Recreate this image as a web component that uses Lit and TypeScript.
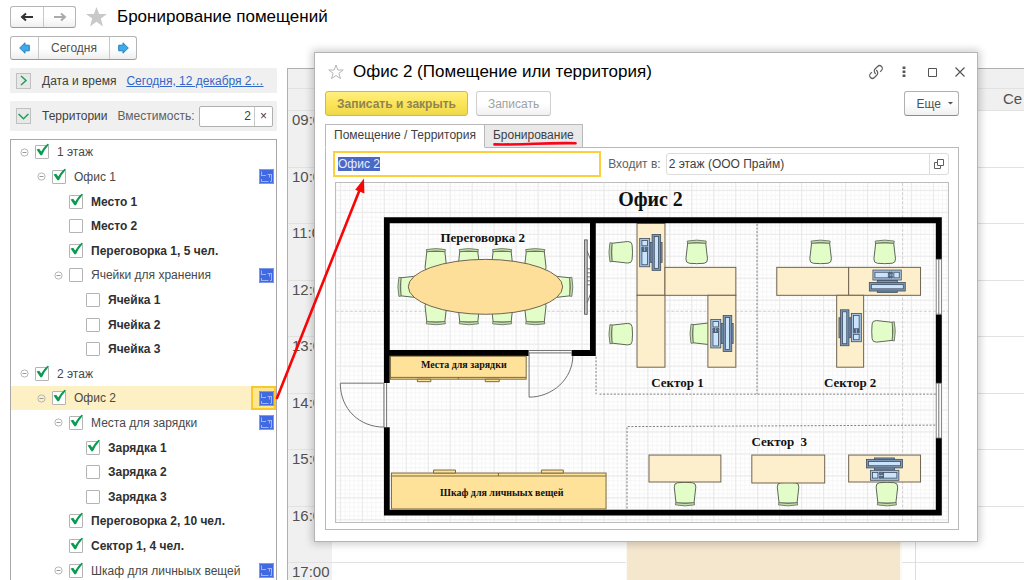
import { LitElement, html, svg, css, nothing } from "lit";
import { customElement, property, state } from "lit/decorators.js";
import { classMap } from "lit/directives/class-map.js";

interface Place {
  name: string;
  level: number;
  checked: boolean;
  group?: boolean;
  plan?: boolean;
  bold?: boolean;
  selected?: boolean;
}

const PLACES: Place[] = [
  { name: "1 этаж", level: 0, checked: true, group: true },
  { name: "Офис 1", level: 1, checked: true, group: true, plan: true },
  { name: "Место 1", level: 2, checked: true, bold: true },
  { name: "Место 2", level: 2, checked: false, bold: true },
  { name: "Переговорка 1, 5 чел.", level: 2, checked: true, bold: true },
  { name: "Ячейки для хранения", level: 2, checked: false, group: true, plan: true },
  { name: "Ячейка 1", level: 3, checked: false, bold: true },
  { name: "Ячейка 2", level: 3, checked: false, bold: true },
  { name: "Ячейка 3", level: 3, checked: false, bold: true },
  { name: "2 этаж", level: 0, checked: true, group: true },
  { name: "Офис 2", level: 1, checked: true, group: true, plan: true, selected: true },
  { name: "Места для зарядки", level: 2, checked: true, group: true, plan: true },
  { name: "Зарядка 1", level: 3, checked: true, bold: true },
  { name: "Зарядка 2", level: 3, checked: false, bold: true },
  { name: "Зарядка 3", level: 3, checked: false, bold: true },
  { name: "Переговорка 2, 10 чел.", level: 2, checked: true, bold: true },
  { name: "Сектор 1, 4 чел.", level: 2, checked: true, bold: true },
  { name: "Шкаф для личныых вещей", level: 2, checked: true, group: true, plan: true },
];

const HOURS = ["09:00", "10:00", "11:00", "12:00", "13:00", "14:00", "15:00", "16:00", "17:00"];

/** Floor plan of the office, drawn in window units. */
@customElement("floor-plan")
export class FloorPlan extends LitElement {
  static styles = css`
    :host { display: block; }
    svg { display: block; width: 100%; height: auto; }
    text { font-family: "Liberation Serif", serif; font-weight: bold; fill: #111; text-anchor: middle; }
    .title { font-size: 20px; }
    .label { font-size: 13px; }
    .shelf { font-size: 10px; }
    .desk { fill: #feefcc; stroke: #6f6350; }
    .cabinet { fill: #ffe29a; stroke: #7a6a3c; }
    .chair { fill: #e3fdc9; stroke: #5c6658; }
    .back { fill: #c3dfa9; stroke: #5c6658; stroke-width: 0.8; }
    .pc { fill: #7e97b4; stroke: #3e4d60; stroke-width: 0.8; }
    .keys { fill: #a9c4e2; stroke: #3e4d60; stroke-width: 0.8; }
    .screen { fill: #cbe3fb; stroke: #3e4d60; stroke-width: 0.8; }
    .thin { fill: none; stroke: #707070; }
    .dots { fill: none; stroke: #7c7c7c; stroke-dasharray: 2 1.6; }
    .dash { fill: none; stroke: #d0d0d0; stroke-dasharray: 3 1.6; }
    .window { fill: #fff; stroke: #777; stroke-width: 0.9; }
    .tv { fill: #c8c8c8; stroke: #555; stroke-width: 0.9; }
  `;

  private chair(x: number, y: number, turn: number) {
    return svg`<g transform="translate(${x} ${y}) rotate(${turn})">
      <path class="chair" d="M-9 -9 L-10.8 7 Q-11 11 -7.4 11.4 Q0 12.2 7.4 11.4 Q11 11 10.8 7 L9 -9 Z"></path>
      <path class="back" d="M-9.6 -10.8 Q0 -12.8 9.6 -10.8 L9.2 -8.6 Q0 -10.2 -9.2 -8.6 Z"></path>
    </g>`;
  }

  private computer(x: number, y: number, turn: number) {
    return svg`<g transform="translate(${x} ${y}) rotate(${turn})">
      <rect class="pc" x="-1" y="-10" width="12" height="20"></rect>
      <rect class="pc" x="1" y="-18" width="8.6" height="36"></rect>
      <rect class="screen" x="3.2" y="-16" width="4.2" height="32"></rect>
      <rect class="keys" x="-11.4" y="-14" width="10" height="28.4"></rect>
      <rect class="screen" x="-9.2" y="-12" width="5.6" height="5.4"></rect>
      <rect class="screen" x="-9.2" y="-1" width="5.6" height="13.4"></rect>
      <path class="pc" d="M-9.4 -5 h2.2 v1.4 h-2.2z M-5.6 -5 h2.2 v1.4 h-2.2z M-9.4 -2.8 h2.2 v1 h-2.2z M-5.6 -2.8 h2.2 v1 h-2.2z"></path>
    </g>`;
  }

  private desk(x: number, y: number, w: number, h: number) {
    return svg`<rect class="desk" x=${x} y=${y} width=${w} height=${h}></rect>`;
  }

  render() {
    return html`<svg viewBox="336 183 613 340" role="img" aria-label="Офис 2">
      <defs>
        <pattern id="minor" x="384.3" y="234.3" width="4.4" height="4.4" patternUnits="userSpaceOnUse">
          <path d="M0 .5H4.4M.5 0V4.4" fill="none" stroke="#f6f6f6" stroke-width="1"></path>
        </pattern>
        <pattern id="major" x="383.8" y="233.8" width="22" height="22" patternUnits="userSpaceOnUse">
          <path d="M0 .5H22M.5 0V22" fill="none" stroke="#e9e9e9" stroke-width="1"></path>
        </pattern>
      </defs>
      <rect x="336" y="183" width="613" height="340" fill="#fff"></rect>
      <rect x="336" y="183" width="613" height="340" fill="url(#minor)"></rect>
      <rect x="336" y="183" width="613" height="340" fill="url(#major)"></rect>
      <path class="dash" d="M336 311.5H949M903.5 183V523"></path>

      <path class="dots" d="M596.5 357V394.5M600 394.5H937M757.7 224V394.5M627.5 509V427L937 425.5"></path>

      ${[436, 469, 502.4, 535.6].map((x) => [this.chair(x, 260.5, 0), this.chair(x, 313.2, 180)])}
      ${this.chair(409.8, 287, -90)} ${this.chair(561.4, 287, 90)}
      <ellipse cx="485.7" cy="287" rx="77.3" ry="27.5" fill="#fedf99" stroke="#6f6350"></ellipse>
      <path class="thin" d="M587.5 251L591 260M587.5 303L591 294M587.5 269H591M587.5 273H591M587.5 277H591M587.5 281H591M587.5 285H591"></path>
      <rect class="tv" x="585" y="240" width="2.6" height="74.5"></rect>

      ${this.chair(697.3, 252, 0)} ${this.chair(821.4, 252, 0)} ${this.chair(885.6, 252, 0)}
      ${this.chair(621.2, 252.4, -90)} ${this.chair(621.2, 334.4, -90)} ${this.chair(702.4, 334, -90)}
      ${this.chair(884.4, 331.6, 90)}
      ${this.chair(685.6, 494.6, 180)} ${this.chair(788.8, 494.6, 180)} ${this.chair(887.8, 494.6, 180)}

      ${this.desk(637.5, 223.5, 28, 72)} ${this.desk(637.5, 295.5, 28, 72)}
      ${this.desk(665.5, 267.5, 71, 28)} ${this.desk(708.5, 295.5, 28, 72)}
      ${this.desk(777.5, 267.5, 72, 28)} ${this.desk(849.5, 267.5, 72, 28)} ${this.desk(837.5, 295.5, 27, 72)}
      ${this.desk(649.5, 455.5, 72, 27)} ${this.desk(752.5, 455.5, 73, 28)} ${this.desk(849.5, 455.5, 72, 27)}
      ${this.computer(651.6, 252.5, 0)} ${this.computer(722.8, 333.8, 0)}
      ${this.computer(888.2, 281.6, 90)} ${this.computer(850.8, 328, 180)} ${this.computer(885.4, 469.4, -90)}

      <path d="M384 217.4H942.8V259.4H936.8V223.4H596.2V356.2H572V350.4H590.4V223.4H389.8V350.4H529V356.2H389.8V383.4H384Z
        M936.8 314.4H942.8V383.6H936.8Z M384 427.6H389.8V510.2H936.8V438.4H942.8V516H384Z" fill="#000"></path>
      <rect class="window" x="937.2" y="259.4" width="5.2" height="55"></rect>
      <rect class="window" x="937.2" y="383.6" width="5.2" height="54.8"></rect>
      <path class="thin" d="M939.8 259.4V314.4M939.8 383.6V438.4"></path>
      <path class="thin" d="M384 383.5H340.3C340.3 410 360 427.5 384 427.5M384 383.5V427.5M386.7 383.5V427.5"></path>
      <path class="thin" d="M529 350.8H572M529 353.2H572M529.4 353V397.5C553 397.5 573.2 379 573.2 356"></path>

      <rect class="cabinet" x="390.5" y="356.5" width="136" height="23"></rect>
      <path class="cabinet" d="M390.5 377.7H526.5M458.5 377.7V379.5M417.5 379.5H431V382H417.5ZM485.5 379.5H499.5V382H485.5Z"></path>
      <rect class="cabinet" x="391.5" y="473.5" width="215" height="36"></rect>
      <path class="cabinet" d="M391.5 476.5H606.5M498.7 473.5V476.5M433.7 470.5H455.7V473.5H433.7ZM541.7 470.5H563.7V473.5H541.7Z"></path>

      <text class="title" x="651" y="206">Офис 2</text>
      <text class="label" x="483" y="242">Переговорка 2</text>
      <text class="shelf" x="464" y="368">Места для зарядки</text>
      <text class="shelf" x="502" y="497">Шкаф для личныых вещей</text>
      <text class="label" x="678" y="387">Сектор 1</text>
      <text class="label" x="851" y="387">Сектор 2</text>
      <text class="label" x="780" y="446" xml:space="preserve">Сектор  3</text>
    </svg>`;
  }
}

/** One line of the territory tree. */
@customElement("place-row")
export class PlaceRow extends LitElement {
  @property({ attribute: false }) place!: Place;
  @state() private checked = false;

  static styles = css`
    :host { display: block; height: 100%; }
    .row { display: flex; align-items: center; height: 100%; box-sizing: border-box; padding-left: 9px; }
    .selected { background: #fdf0c4; }
    .indent { flex: none; }
    .toggle { flex: none; width: 9px; height: 9px; padding: 0; margin-right: 6px; border: 0; background: none; }
    .toggle svg, .tick svg, .plan svg { display: block; }
    .spacer { flex: none; width: 15px; }
    .check { display: flex; align-items: center; flex: 1; min-width: 0; gap: 8px; color: #484848; white-space: nowrap; }
    .bold { font-weight: bold; color: #303030; }
    .tick { position: relative; flex: none; width: 14px; height: 14px; }
    .tick input { appearance: none; display: block; box-sizing: border-box; width: 14px; height: 14px; margin: 0;
      border: 1px solid #b4b4b4; border-radius: 1px; background: #fff; }
    .tick svg { position: absolute; left: 0; top: -2px; pointer-events: none; }
    .plan { flex: none; display: flex; align-items: center; justify-content: center; width: 25px; height: 100%;
      box-sizing: border-box; padding: 0 0 0 5px; margin: 0; border: 0; background: none; }
    .selected .plan { border: 2px solid #fbc926; background: #fde691; }
  `;

  willUpdate(changed: Map<string, unknown>) {
    if (changed.has("place")) this.checked = this.place.checked;
  }

  render() {
    const p = this.place;
    return html`<div class=${classMap({ row: true, selected: !!p.selected })}>
      <span class="indent" style="width:${p.level * 17}px"></span>
      ${p.group
        ? html`<button class="toggle" aria-label="Свернуть"><svg width="9" height="9" viewBox="0 0 9 9">
            <circle cx="4.5" cy="4.5" r="3.6" fill="none" stroke="#b5b5b5"></circle><path d="M2.5 4.5H6.5" stroke="#999"></path></svg></button>`
        : html`<span class="spacer"></span>`}
      <label class=${classMap({ check: true, bold: !!p.bold })}>
        <span class="tick">
          <input type="checkbox" .checked=${this.checked} @change=${(e: Event) => (this.checked = (e.target as HTMLInputElement).checked)} />
          ${this.checked
            ? html`<svg width="15" height="14" viewBox="0 0 15 14"><path d="M1.6 6.6L4.2 5.8L6.2 8.6Q8.6 4 12.6 .8L14 1.6Q9.6 6.4 7 12.2H5.4Z" fill="#0a9a50"></path></svg>`
            : nothing}
        </span>
        ${p.name}
      </label>
      ${p.plan
        ? html`<button class="plan" aria-label="План"><svg width="15" height="15" viewBox="0 0 15 15">
            <rect width="15" height="15" fill="#4169e1"></rect>
            <path d="M.5 .5H14.5V14.5H.5Z" fill="none" stroke="#7f99ec"></path>
            <path d="M2.5 13V10M2.5 6.5V2.5M2 6.5H7M8.5 5.5H13M10.5 5.5V8.5M2.5 12.5H9.5M12.5 6V12.5H11" fill="none" stroke="#9fb4f4"></path></svg></button>`
        : nothing}
    </div>`;
  }
}

@customElement("app-root")
export class AppRoot extends LitElement {
  static styles = css`
    :host { display: block; position: relative; height: 100vh; overflow: hidden; background: #fff; color: #404040;
      font: 12px/16px "Liberation Sans", Arial, sans-serif; }
    button, input { font: inherit; color: inherit; }
    button { padding: 0; margin: 0; }
    svg { display: block; }
    .page { display: flex; flex-direction: column; height: 100%; box-sizing: border-box; padding: 6px 0 0 10px; }
    .head { display: flex; align-items: center; gap: 10px; height: 22px; }
    h1, h2 { margin: 0; font-weight: normal; font-size: 17px; line-height: 22px; color: #000; white-space: nowrap; }
    .segments { display: flex; border: 1px solid #b5b5b5; border-bottom-color: #999; border-radius: 3px; box-sizing: border-box;
      background: linear-gradient(#fff 50%, #efefef); }
    .segments button { display: flex; align-items: center; justify-content: center; border: 0; background: none; }
    .segments button + button { border-left: 1px solid #c8c8c8; }
    .history { height: 22px; }
    .history button { width: 32px; }
    .days { align-self: flex-start; height: 24px; margin: 8px 0; color: #505050; }
    .days button { width: 27px; }
    .days .today { width: 71px; }
    .work { display: flex; flex: 1; min-height: 0; gap: 10px; }
    .side { display: flex; flex-direction: column; flex: none; width: 267px; gap: 8px; }
    .group { display: flex; align-items: center; flex: none; height: 25px; padding: 0 4px 0 6px; background: #f0f0f0; white-space: nowrap; }
    .tall { height: 30px; }
    .fold { display: flex; flex: none; align-items: center; justify-content: center; width: 15px; height: 16px; margin-right: 11px;
      border: 1px solid #c0c0c0; background: #e8e8e8; box-sizing: border-box; }
    .group a { margin-left: 10px; color: #3367c8; }
    .caption { margin-left: 10px; color: #606060; }
    .count { display: flex; flex: 1; min-width: 0; height: 21px; margin-left: 4px; box-sizing: border-box; border: 1px solid #b0b0b0;
      border-radius: 2px; background: #fff; }
    .count input { flex: 1; min-width: 0; padding: 0 3px 0 0; border: 0; background: none; text-align: right; outline: 0; }
    .count button { width: 18px; border: 0; border-left: 1px solid #c8c8c8; background: none; }
    .tree { flex: 1; min-height: 0; margin: 0; padding: 0; list-style: none; overflow: hidden; border: 1px solid #a8a8a8; border-bottom: 0; }
    .tree li { height: 25px; }
    .tree li:nth-child(5n + 1), .tree li:nth-child(5n + 4) { height: 24px; }

    .calendar { flex: 1; min-width: 0; display: grid; grid-template-columns: 44px 1fr 109px; grid-template-rows: 42px 1fr;
      overflow: hidden; border: solid #b0b0b0; border-width: 1px 0 0 1px; font-size: 15px; line-height: 18px; color: #505050; }
    .top { background: #f0f0f0; border-bottom: 1px solid #e2e2e2; box-sizing: border-box; }
    .top::before { content: ""; display: block; height: 19px; border-bottom: 1px solid #e2e2e2; }
    .top span { padding-left: 88px; line-height: 20px; }
    .hours { background: #f0f0f0; }
    .day { position: relative; }
    .day + .day { border-left: 1px solid #dcdcdc; }
    .hour { height: 57px; box-sizing: border-box; padding-left: 4px; border-bottom: 1px solid #e2e2e2; }
    .hour:nth-child(even) { height: 56px; }
    .event { position: absolute; top: 339px; bottom: 0; left: 50.5%; right: 13px; background: #f5e6ce; border: solid #fdf8f0; border-width: 0 2px 0 1px; }

    .dialog { position: absolute; left: 314px; right: 46px; top: 52px; box-sizing: border-box; padding: 8px 18px 11px 10px;
      border: 1px solid #b4b4b4; background: #fff; box-shadow: 0 0 8px 2px rgba(0, 0, 0, 0.2); }
    .bar { display: flex; align-items: center; height: 22px; gap: 9px; padding-left: 3px; }
    .bar h2 { flex: 1; }
    .tools { display: flex; align-items: center; gap: 12px; margin-right: -9px; }
    .tools button { display: grid; place-items: center; width: 16px; height: 16px; border: 0; background: none; }
    .commands { display: flex; gap: 8px; margin: 8px 0; height: 25px; }
    .command { padding: 0 11px; box-sizing: border-box; border: 1px solid #d0d0d0; border-bottom-color: #bbb; border-radius: 3px; color: #a0a0a0;
      background: linear-gradient(#fff 50%, #f0f0f0); }
    .primary { border-color: #d8bb2e; background: linear-gradient(#ffef80, #fbe253 60%, #ecd94e); color: #8f8552; font-weight: bold; }
    .more { display: flex; align-items: center; gap: 7px; padding: 0 5px 0 12px; margin-left: auto; border-color: #b0b0b0; border-bottom-color: #8c8c8c; color: #505050; }
    .tabs { display: flex; height: 24px; margin-bottom: -1px; }
    .tab { position: relative; padding: 0 8px 2px; box-sizing: border-box; border: 1px solid #b8b8b8; background: #e9e9e9; color: #404040; }
    .tab + .tab { border-left: 0; }
    .active { background: #fff; border-bottom-color: #fff; }
    .stroke { position: absolute; left: 8px; bottom: 1px; }
    .panel { border: 1px solid #b8b8b8; padding: 3px 9px 6px; }
    .fields { display: flex; align-items: center; height: 26px; margin: 0 0 5px -2px; }
    .name { flex: 1; min-width: 0; height: 26px; box-sizing: border-box; padding: 0 3px; border: 2px solid #fbd03b; outline: 0; background: #fff; }
    .name::selection { background: #4a68c6; color: #e8eefc; }
    .fields label { margin: 0 5px 0 7px; color: #606060; }
    .parent { display: flex; flex: none; width: 46%; height: 22px; box-sizing: border-box; border: 1px solid #dcdcdc; border-radius: 3px; }
    .parent input { flex: 1; min-width: 0; padding: 0 2px; border: 0; outline: 0; background: none; }
    .parent button { display: grid; place-items: center; width: 19px; border: 0; border-left: 1px solid #dcdcdc; background: none; }
    .plan { display: block; border: 1px solid #bdbdbd; }
    .arrow { position: absolute; left: 270px; top: 170px; pointer-events: none; }
  `;

  async firstUpdated() {
    const field = this.renderRoot.querySelector<HTMLInputElement>(".name")!;
    field.focus();
    field.select();
  }

  render() {
    return html`
      <div class="page">
        <header class="head">
          <div class="segments history">
            <button aria-label="Назад"><svg width="14" height="10" viewBox="0 0 14 10"><path d="M13 5H3M6 1.4L2 5L6 8.6" fill="none" stroke="#333" stroke-width="2"></path></svg></button>
            <button aria-label="Вперед"><svg width="14" height="10" viewBox="0 0 14 10"><path d="M1 5H11M8 1.4L12 5L8 8.6" fill="none" stroke="#aaa" stroke-width="2"></path></svg></button>
          </div>
          <svg width="21" height="20" viewBox="0 0 21 20"><path d="M10.5 0L13.1 7H21L14.8 11.6L17 19.4L10.5 14.8L4 19.4L6.2 11.6L0 7H7.9Z" fill="#c9c9c9"></path></svg>
          <h1>Бронирование помещений</h1>
        </header>
        <div class="segments days">
          <button aria-label="Предыдущий день"><svg width="11" height="12" viewBox="0 0 11 12"><path d="M.7 6L6 .8V3.2H10.3V8.8H6V11.2Z" fill="#3fa9ea" stroke="#2382c0"></path></svg></button>
          <button class="today">Сегодня</button>
          <button aria-label="Следующий день"><svg width="11" height="12" viewBox="0 0 11 12"><path d="M10.3 6L5 .8V3.2H.7V8.8H5V11.2Z" fill="#3fa9ea" stroke="#2382c0"></path></svg></button>
        </div>
        <main class="work">
          <aside class="side">
            <div class="group">
              <button class="fold" aria-label="Развернуть"><svg width="9" height="11" viewBox="0 0 9 11"><path d="M2 1L7 5.5L2 10" fill="none" stroke="#1e9e58" stroke-width="1.5"></path></svg></button>
              <span>Дата и время</span>
              <a href="#">Сегодня, 12 декабря 2…</a>
            </div>
            <div class="group tall">
              <button class="fold" aria-label="Свернуть"><svg width="11" height="9" viewBox="0 0 11 9"><path d="M.6 2L5.5 6.8L10.4 2" fill="none" stroke="#1e9e58" stroke-width="1.5"></path></svg></button>
              <span>Территории</span>
              <label class="caption" for="capacity">Вместимость:</label>
              <div class="count"><input id="capacity" value="2" /><button aria-label="Очистить">×</button></div>
            </div>
            <ul class="tree">
              ${PLACES.map((p) => html`<li><place-row .place=${p}></place-row></li>`)}
            </ul>
          </aside>
          <section class="calendar">
            <div class="top"></div><div class="top"></div><div class="top"><span>Се</span></div>
            <div class="hours">${HOURS.map((h) => html`<div class="hour">${h}</div>`)}</div>
            <div class="day">${HOURS.map(() => html`<div class="hour"></div>`)}<div class="event"></div></div>
            <div class="day">${HOURS.map(() => html`<div class="hour"></div>`)}</div>
          </section>
        </main>
      </div>

      <section class="dialog" role="dialog" aria-labelledby="dialog-title">
        <div class="bar">
          <svg width="16" height="16" viewBox="0 0 16 16"><path d="M8 1L9.8 6H15.2L10.9 9.3L12.5 14.6L8 11.5L3.5 14.6L5.1 9.3L.8 6H6.2Z" fill="none" stroke="#b5b5b5"></path></svg>
          <h2 id="dialog-title">Офис 2 (Помещение или территория)</h2>
          <div class="tools">
            <button aria-label="Ссылка"><svg width="16" height="16" viewBox="0 0 16 16"><g transform="translate(8 8) rotate(-45)" fill="none" stroke="#606060" stroke-width="1.2"><path d="M-1.6 1.2Q-1.4 -2.8 1.8 -2.8H5A2.8 2.8 0 0 1 5 2.8H3"></path><path d="M1.6 -1.2Q1.4 2.8 -1.8 2.8H-5A2.8 2.8 0 0 1 -5 -2.8H-3"></path></g></svg></button>
            <button aria-label="Меню"><svg width="4" height="12" viewBox="0 0 4 12"><path d="M.6 .6H3.4V3H.6ZM.6 4.6H3.4V7H.6ZM.6 8.6H3.4V11H.6Z" fill="#555"></path></svg></button>
            <button aria-label="Развернуть"><svg width="9" height="9" viewBox="0 0 9 9"><path d="M.5 .5H8.5V8.5H.5Z" fill="none" stroke="#555"></path></svg></button>
            <button aria-label="Закрыть"><svg width="10" height="10" viewBox="0 0 10 10"><path d="M.5 .5L9.5 9.5M9.5 .5L.5 9.5" stroke="#555" stroke-width="1.2"></path></svg></button>
          </div>
        </div>
        <div class="commands">
          <button class="command primary">Записать и закрыть</button>
          <button class="command">Записать</button>
          <button class="command more">Еще<svg width="5" height="3" viewBox="0 0 5 3"><path d="M0 0H5L2.5 2.6Z" fill="#505050"></path></svg></button>
        </div>
        <div class="tabs" role="tablist">
          <button class="tab active" role="tab">Помещение / Территория</button>
          <button class="tab" role="tab">Бронирование<svg class="stroke" width="84" height="5" viewBox="0 0 84 5"><path d="M1.5 3.4Q24 3.6 42 2.8T82.5 2.2" fill="none" stroke="#f8041c" stroke-width="2.6" stroke-linecap="round"></path></svg></button>
        </div>
        <div class="panel">
          <div class="fields">
            <input class="name" value="Офис 2" aria-label="Наименование" />
            <label for="parent">Входит в:</label>
            <div class="parent">
              <input id="parent" value="2 этаж (ООО Прайм)" />
              <button aria-label="Открыть"><svg width="10" height="10" viewBox="0 0 10 10"><path d="M3.5 .5H9.5V6.5H3.5ZM3.5 3.5H.5V9.5H6.5V6.5" fill="none" stroke="#606060"></path></svg></button>
            </div>
          </div>
          <floor-plan class="plan"></floor-plan>
        </div>
      </section>

      <svg class="arrow" width="100" height="236" viewBox="270 170 100 236">
        <path d="M277 398L360 189" fill="none" stroke="#fa0505" stroke-width="2.6" stroke-linecap="round"></path>
        <path d="M364 178.5L364.4 193.4L355.2 189.8Z" fill="#fa0505"></path>
      </svg>
    `;
  }
}
